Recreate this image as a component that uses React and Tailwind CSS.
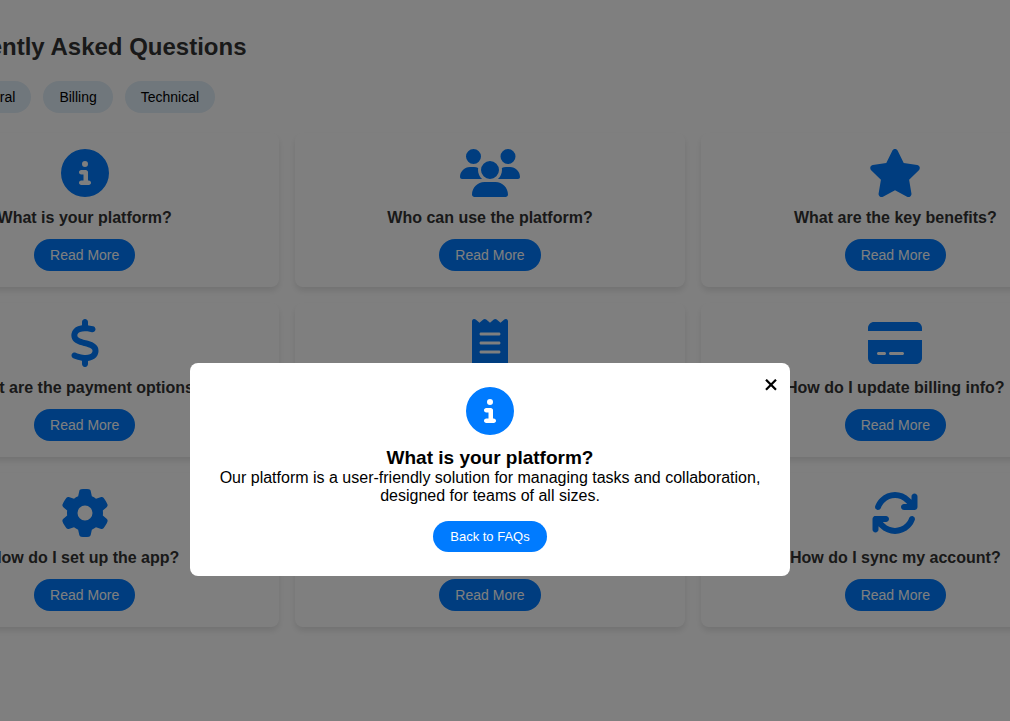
import { useState } from 'react';
import {
  FaArrowsRotate,
  FaCircleInfo,
  FaCreditCard,
  FaDollarSign,
  FaGear,
  FaMobileScreen,
  FaReceipt,
  FaStar,
  FaUsers,
} from 'react-icons/fa6';

const categories = ['All', 'General', 'Billing', 'Technical'];

const faqs = [
  {
    icon: FaCircleInfo,
    iconWidth: 'w-12',
    category: 'General',
    question: 'What is your platform?',
    answer: 'Our platform is a user-friendly solution for managing tasks and collaboration, designed for teams of all sizes.',
  },
  { icon: FaUsers, iconWidth: 'w-15', category: 'General', question: 'Who can use the platform?' },
  { icon: FaStar, iconWidth: 'w-[54px]', category: 'General', question: 'What are the key benefits?' },
  { icon: FaDollarSign, iconWidth: 'w-12', category: 'Billing', question: 'What are the payment options?' },
  { icon: FaReceipt, iconWidth: 'w-9', category: 'Billing', question: 'How do I get a receipt?' },
  { icon: FaCreditCard, iconWidth: 'w-[54px]', category: 'Billing', question: 'How do I update billing info?' },
  { icon: FaGear, iconWidth: 'w-12', category: 'Technical', question: 'How do I set up the app?' },
  { icon: FaMobileScreen, iconWidth: 'w-9', category: 'Technical', question: 'Is there a mobile app?' },
  { icon: FaArrowsRotate, iconWidth: 'w-12', category: 'Technical', question: 'How do I sync my account?' },
];

function FaqIcon({ faq }) {
  const Icon = faq.icon;
  return <Icon className={`h-12 text-[#007bff] ${faq.iconWidth}`} />;
}

function FaqCard({ faq, onOpen }) {
  return (
    <article className="flex flex-col items-center rounded-lg bg-white p-4 shadow-[0_4px_6px_rgba(0,0,0,0.1)]">
      <FaqIcon faq={faq} />
      <h3 className="my-[11px] text-base leading-5 font-bold text-[#333]">{faq.question}</h3>
      <button
        type="button"
        onClick={() => onOpen(faq)}
        className="rounded-full bg-[#007bff] px-4 py-2 text-sm leading-4 text-white"
      >
        Read More
      </button>
    </article>
  );
}

function FaqModal({ faq, onClose }) {
  return (
    <div className="fixed inset-0 flex items-start justify-center bg-black/50 pt-[363px] pr-[30px]">
      <div
        role="dialog"
        aria-modal="true"
        aria-labelledby="faq-title"
        className="relative flex w-full max-w-[600px] flex-col items-center rounded-lg bg-white p-6 text-center text-black"
      >
        <button type="button" aria-label="Close" onClick={onClose} className="absolute top-4 right-3">
          <svg viewBox="0 0 14 12" className="h-3 w-[14px]" fill="none" stroke="currentColor" strokeWidth="2.2">
            <path d="M2 0.7 L12 10.7 M12 0.7 L2 10.7" />
          </svg>
        </button>
        <FaqIcon faq={faq} />
        <h3 id="faq-title" className="mt-3 text-[19px] leading-[22px] font-bold">{faq.question}</h3>
        <p className="text-base leading-[18px]">{faq.answer}</p>
        <button
          type="button"
          onClick={onClose}
          className="mt-4 rounded-full bg-[#007bff] px-[17px] py-2 text-[13px] leading-[15px] text-white"
        >
          Back to FAQs
        </button>
      </div>
    </div>
  );
}

export default function App() {
  const [category, setCategory] = useState('All');
  const [active, setActive] = useState(faqs[0]);
  const visible = faqs.filter((f) => category === 'All' || f.category === category);

  return (
    <div className="flex min-h-screen justify-center overflow-hidden bg-white pr-[30px] font-['Liberation_Sans',Arial,sans-serif]">
      <main className="w-[1200px] shrink-0 pt-[33px]">
        <h2 className="mb-5 pl-8 text-2xl leading-7 font-bold text-[#333]">Frequently Asked Questions</h2>

        {/* Category filters */}
        <div className="mb-5 flex gap-3">
          {categories.map((c) => (
            <button
              key={c}
              type="button"
              onClick={() => setCategory(c)}
              className="rounded-full bg-[#e1eef8] px-4 py-2 text-sm leading-4 text-black"
            >
              {c}
            </button>
          ))}
        </div>

        {/* Question cards */}
        <div className="grid grid-cols-3 gap-4">
          {visible.map((faq) => (
            <FaqCard key={faq.question} faq={faq} onOpen={setActive} />
          ))}
        </div>
      </main>

      {active && <FaqModal faq={active} onClose={() => setActive(null)} />}
    </div>
  );
}
